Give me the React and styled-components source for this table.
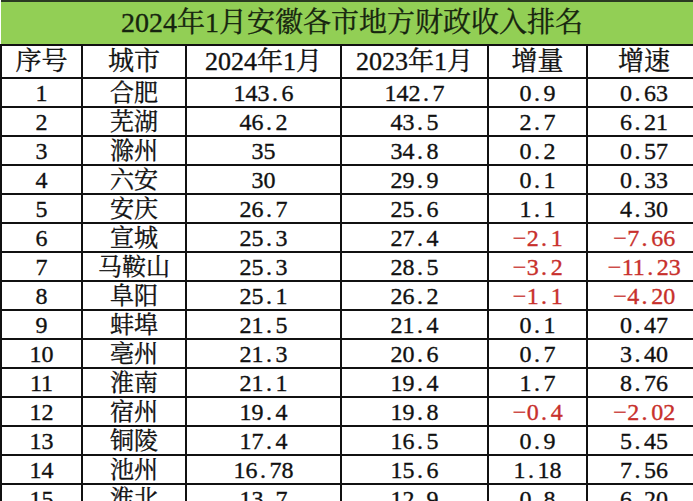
import React from "react";
import styled, { createGlobalStyle } from "styled-components";

const Global = createGlobalStyle`
  html, body { margin: 0; padding: 0; background: #fff; }
  body { font-family: "Liberation Serif", "Noto Serif CJK SC", "Noto Sans CJK SC", serif; }
`;

const Page = styled.div`
  width: 693px;
  height: 501px;
  overflow: hidden;
  background: #fff;
`;

const Table = styled.table`
  width: 700px;
  table-layout: fixed;
  border-collapse: collapse;
  color: #111;
  font-family: "Liberation Serif", "Noto Serif CJK SC", "Noto Sans CJK SC", serif;
  -webkit-text-stroke: 0.35px currentColor;
`;

const TitleCell = styled.td`
  height: 42px;
  background: #92cf55;
  border-top: 2px solid #2a3a22;
  border-bottom: 2px solid #111;
  color: #16240f;
  font-size: 28px;
  line-height: 1;
  text-align: center;
  vertical-align: middle;
  padding: 0 0 0 2px;
`;

const HeadCell = styled.th`
  height: 31px;
  border: 2px solid #111;
  font-weight: 400;
  font-size: 26px;
  line-height: 1;
  text-align: center;
  vertical-align: middle;
  padding: 0;
`;

const Cell = styled.td`
  height: 27px;
  border: 2px solid #111;
  font-size: 24px;
  line-height: 1;
  text-align: center;
  vertical-align: middle;
  padding: 0;
  white-space: nowrap;
  color: ${(p) => (p.$neg ? "#c8302c" : "#111")};
`;

const Half = styled.span`
  display: inline-block;
  width: ${(p) => (p.$dot ? "0.5em" : "0.6em")};
  text-align: ${(p) => (p.$dot ? "left" : "center")};
  padding-left: ${(p) => (p.$dot ? "0.1em" : "0")};
  box-sizing: border-box;
`;

const Num = ({ v }) => {
  const s = String(v);
  return (
    <>
      {s.split("").map((ch, i) => {
        if (ch === ".") return <Half key={i} $dot>.</Half>;
        if (ch === "-") return <Half key={i}>−</Half>;
        return <React.Fragment key={i}>{ch}</React.Fragment>;
      })}
    </>
  );
};

const rows = [
  [1, "合肥", "143.6", "142.7", "0.9", "0.63"],
  [2, "芜湖", "46.2", "43.5", "2.7", "6.21"],
  [3, "滁州", "35", "34.8", "0.2", "0.57"],
  [4, "六安", "30", "29.9", "0.1", "0.33"],
  [5, "安庆", "26.7", "25.6", "1.1", "4.30"],
  [6, "宣城", "25.3", "27.4", "-2.1", "-7.66"],
  [7, "马鞍山", "25.3", "28.5", "-3.2", "-11.23"],
  [8, "阜阳", "25.1", "26.2", "-1.1", "-4.20"],
  [9, "蚌埠", "21.5", "21.4", "0.1", "0.47"],
  [10, "亳州", "21.3", "20.6", "0.7", "3.40"],
  [11, "淮南", "21.1", "19.4", "1.7", "8.76"],
  [12, "宿州", "19.4", "19.8", "-0.4", "-2.02"],
  [13, "铜陵", "17.4", "16.5", "0.9", "5.45"],
  [14, "池州", "16.78", "15.6", "1.18", "7.56"],
  [15, "淮北", "13.7", "12.9", "0.8", "6.20"],
];

const widths = [81, 104, 155, 147, 99, 114];
const heads = ["序号", "城市", "2024年1月", "2023年1月", "增量", "增速"];

export default function App() {
  return (
    <Page>
      <Global />
      <Table>
        <colgroup>
          {widths.map((w, i) => (
            <col key={i} style={{ width: w }} />
          ))}
        </colgroup>
        <thead>
          <tr>
            <TitleCell colSpan={6}>2024年1月安徽各市地方财政收入排名</TitleCell>
          </tr>
          <tr>
            {heads.map((h) => (
              <HeadCell key={h}>{h}</HeadCell>
            ))}
          </tr>
        </thead>
        <tbody>
          {rows.map((r) => (
            <tr key={r[0]}>
              <Cell>{r[0]}</Cell>
              <Cell>{r[1]}</Cell>
              <Cell><Num v={r[2]} /></Cell>
              <Cell><Num v={r[3]} /></Cell>
              <Cell $neg={r[4].startsWith("-")}><Num v={r[4]} /></Cell>
              <Cell $neg={r[5].startsWith("-")}><Num v={r[5]} /></Cell>
            </tr>
          ))}
        </tbody>
      </Table>
    </Page>
  );
}
